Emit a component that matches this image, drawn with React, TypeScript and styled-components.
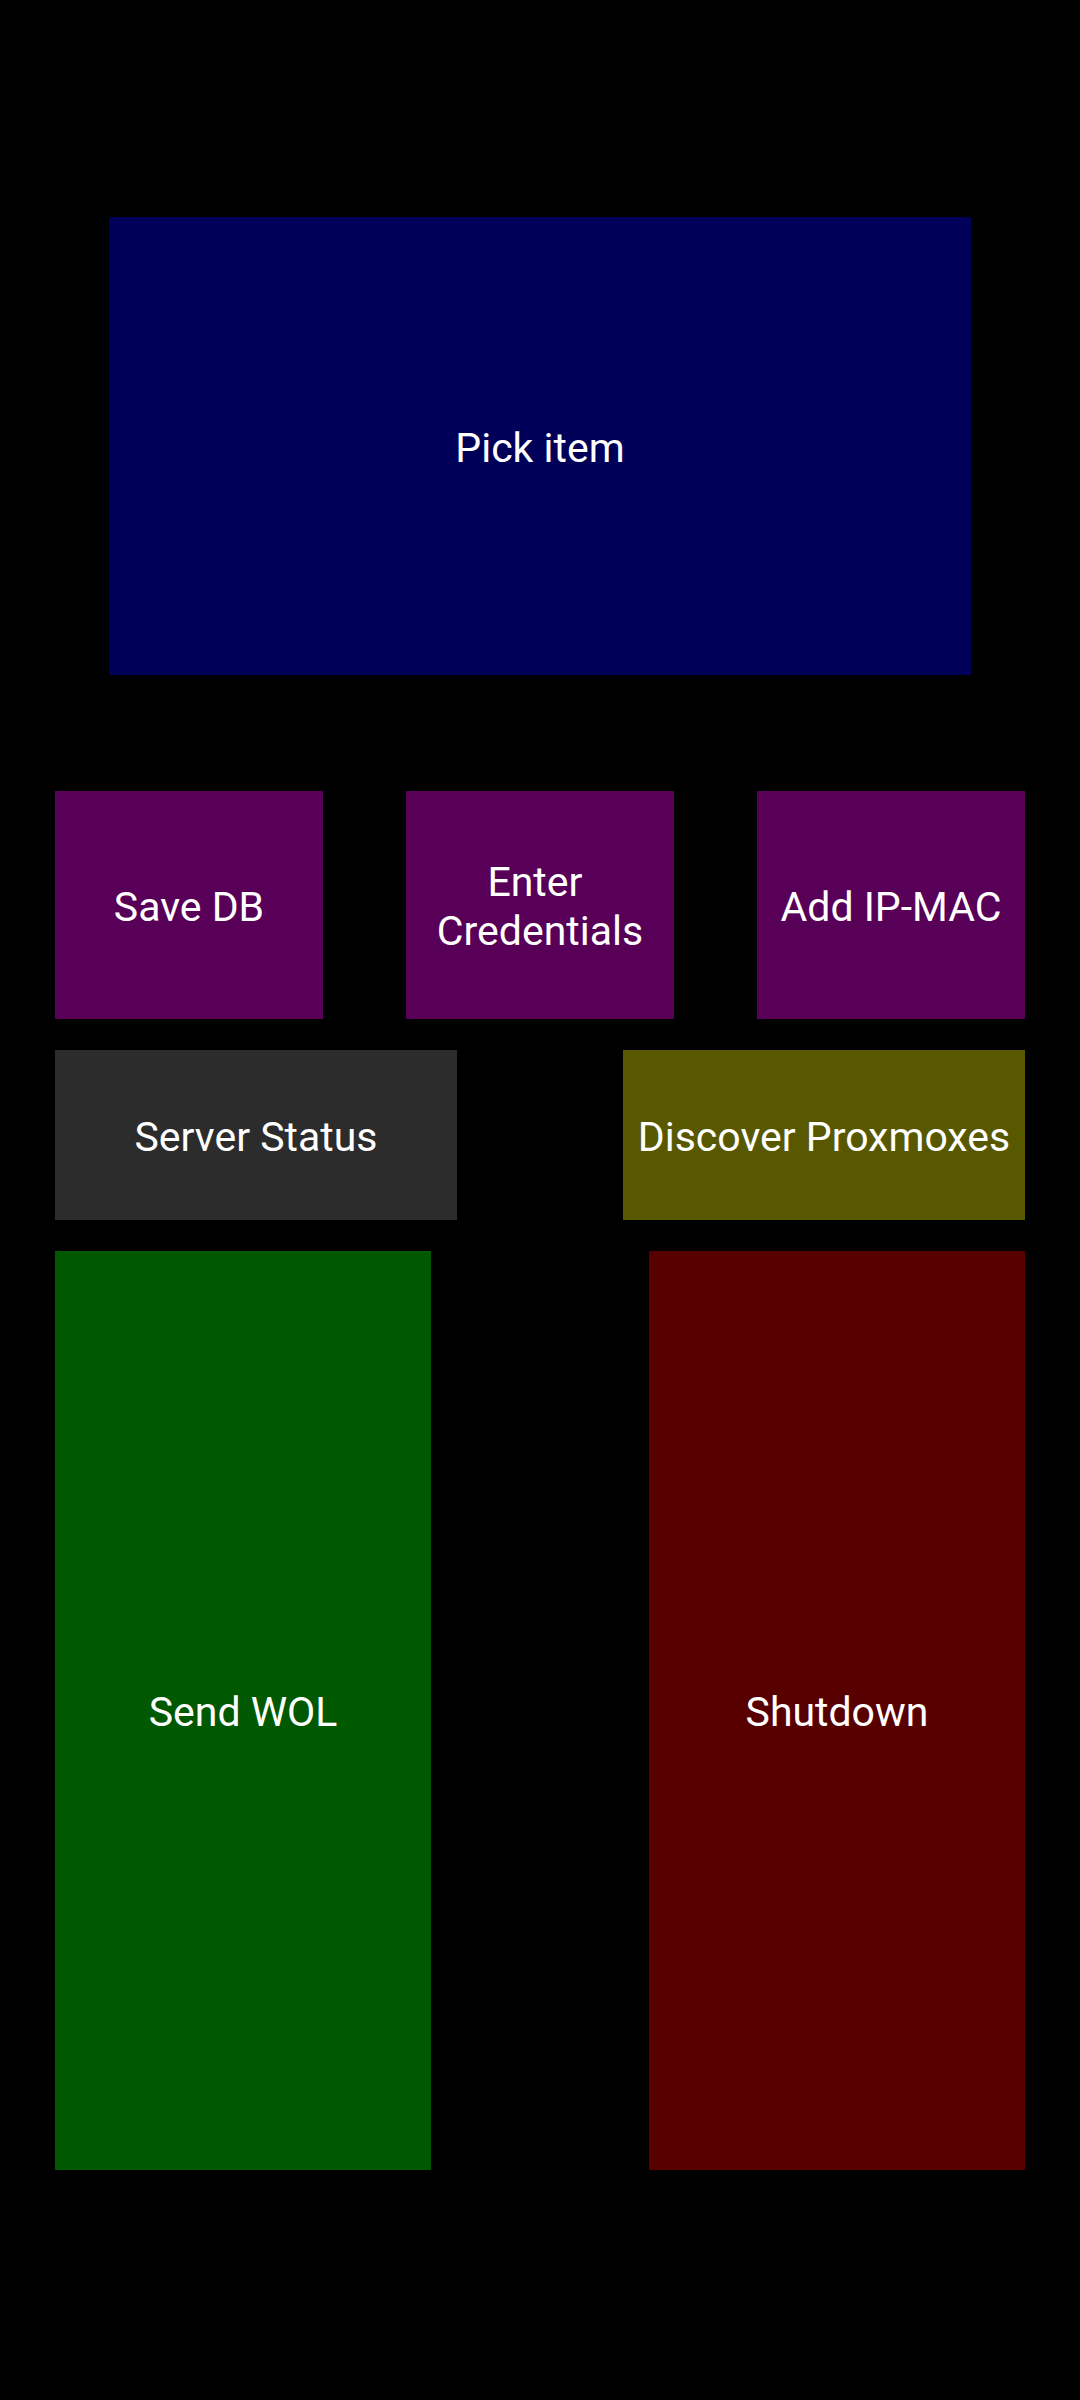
import React from 'react';
import styled, { createGlobalStyle } from 'styled-components';

const GlobalStyle = createGlobalStyle`
  html, body {
    margin: 0;
    padding: 0;
    background: #000000;
  }
`;

const Screen = styled.div`
  box-sizing: border-box;
  width: 1080px;
  min-height: 2400px;
  background: #000000;
  padding: 217px 55px 0;
  display: flex;
  flex-direction: column;
  font-family: Roboto, 'Noto Sans', sans-serif;
`;

const Tile = styled.button<{ color: string; width: number; height: number }>`
  box-sizing: border-box;
  width: ${(props) => props.width}px;
  height: ${(props) => props.height}px;
  background: ${(props) => props.color};
  border: none;
  border-radius: 0;
  margin: 0;
  padding: 4px 6px 0;
  display: flex;
  align-items: center;
  justify-content: center;
  text-align: center;
  color: #ffffff;
  font-family: Roboto, 'Noto Sans', sans-serif;
  font-weight: 400;
  font-size: 41px;
  line-height: 49px;
  cursor: pointer;
`;

const PickRow = styled.div`
  display: flex;
  justify-content: center;
  margin-bottom: 116px;
`;

const Row = styled.div<{ gapAfter?: number }>`
  display: flex;
  justify-content: space-between;
  margin-bottom: ${(props) => props.gapAfter ?? 0}px;
`;

const App: React.FC = () => (
  <Screen>
    <GlobalStyle />
    <PickRow>
      <Tile color='#000058' width={862} height={458}>
        Pick item
      </Tile>
    </PickRow>
    <Row gapAfter={31}>
      <Tile color='#580058' width={268} height={228}>
        Save DB
      </Tile>
      <Tile color='#580058' width={268} height={228}>
        {'Enter\u00a0'}
        <br />
        Credentials
      </Tile>
      <Tile color='#580058' width={268} height={228}>
        Add IP-MAC
      </Tile>
    </Row>
    <Row gapAfter={31}>
      <Tile color='#2c2c2c' width={402} height={170}>
        Server Status
      </Tile>
      <Tile color='#585800' width={402} height={170}>
        Discover Proxmoxes
      </Tile>
    </Row>
    <Row>
      <Tile color='#005800' width={376} height={919}>
        Send WOL
      </Tile>
      <Tile color='#580000' width={376} height={919}>
        Shutdown
      </Tile>
    </Row>
  </Screen>
);

export default App;
